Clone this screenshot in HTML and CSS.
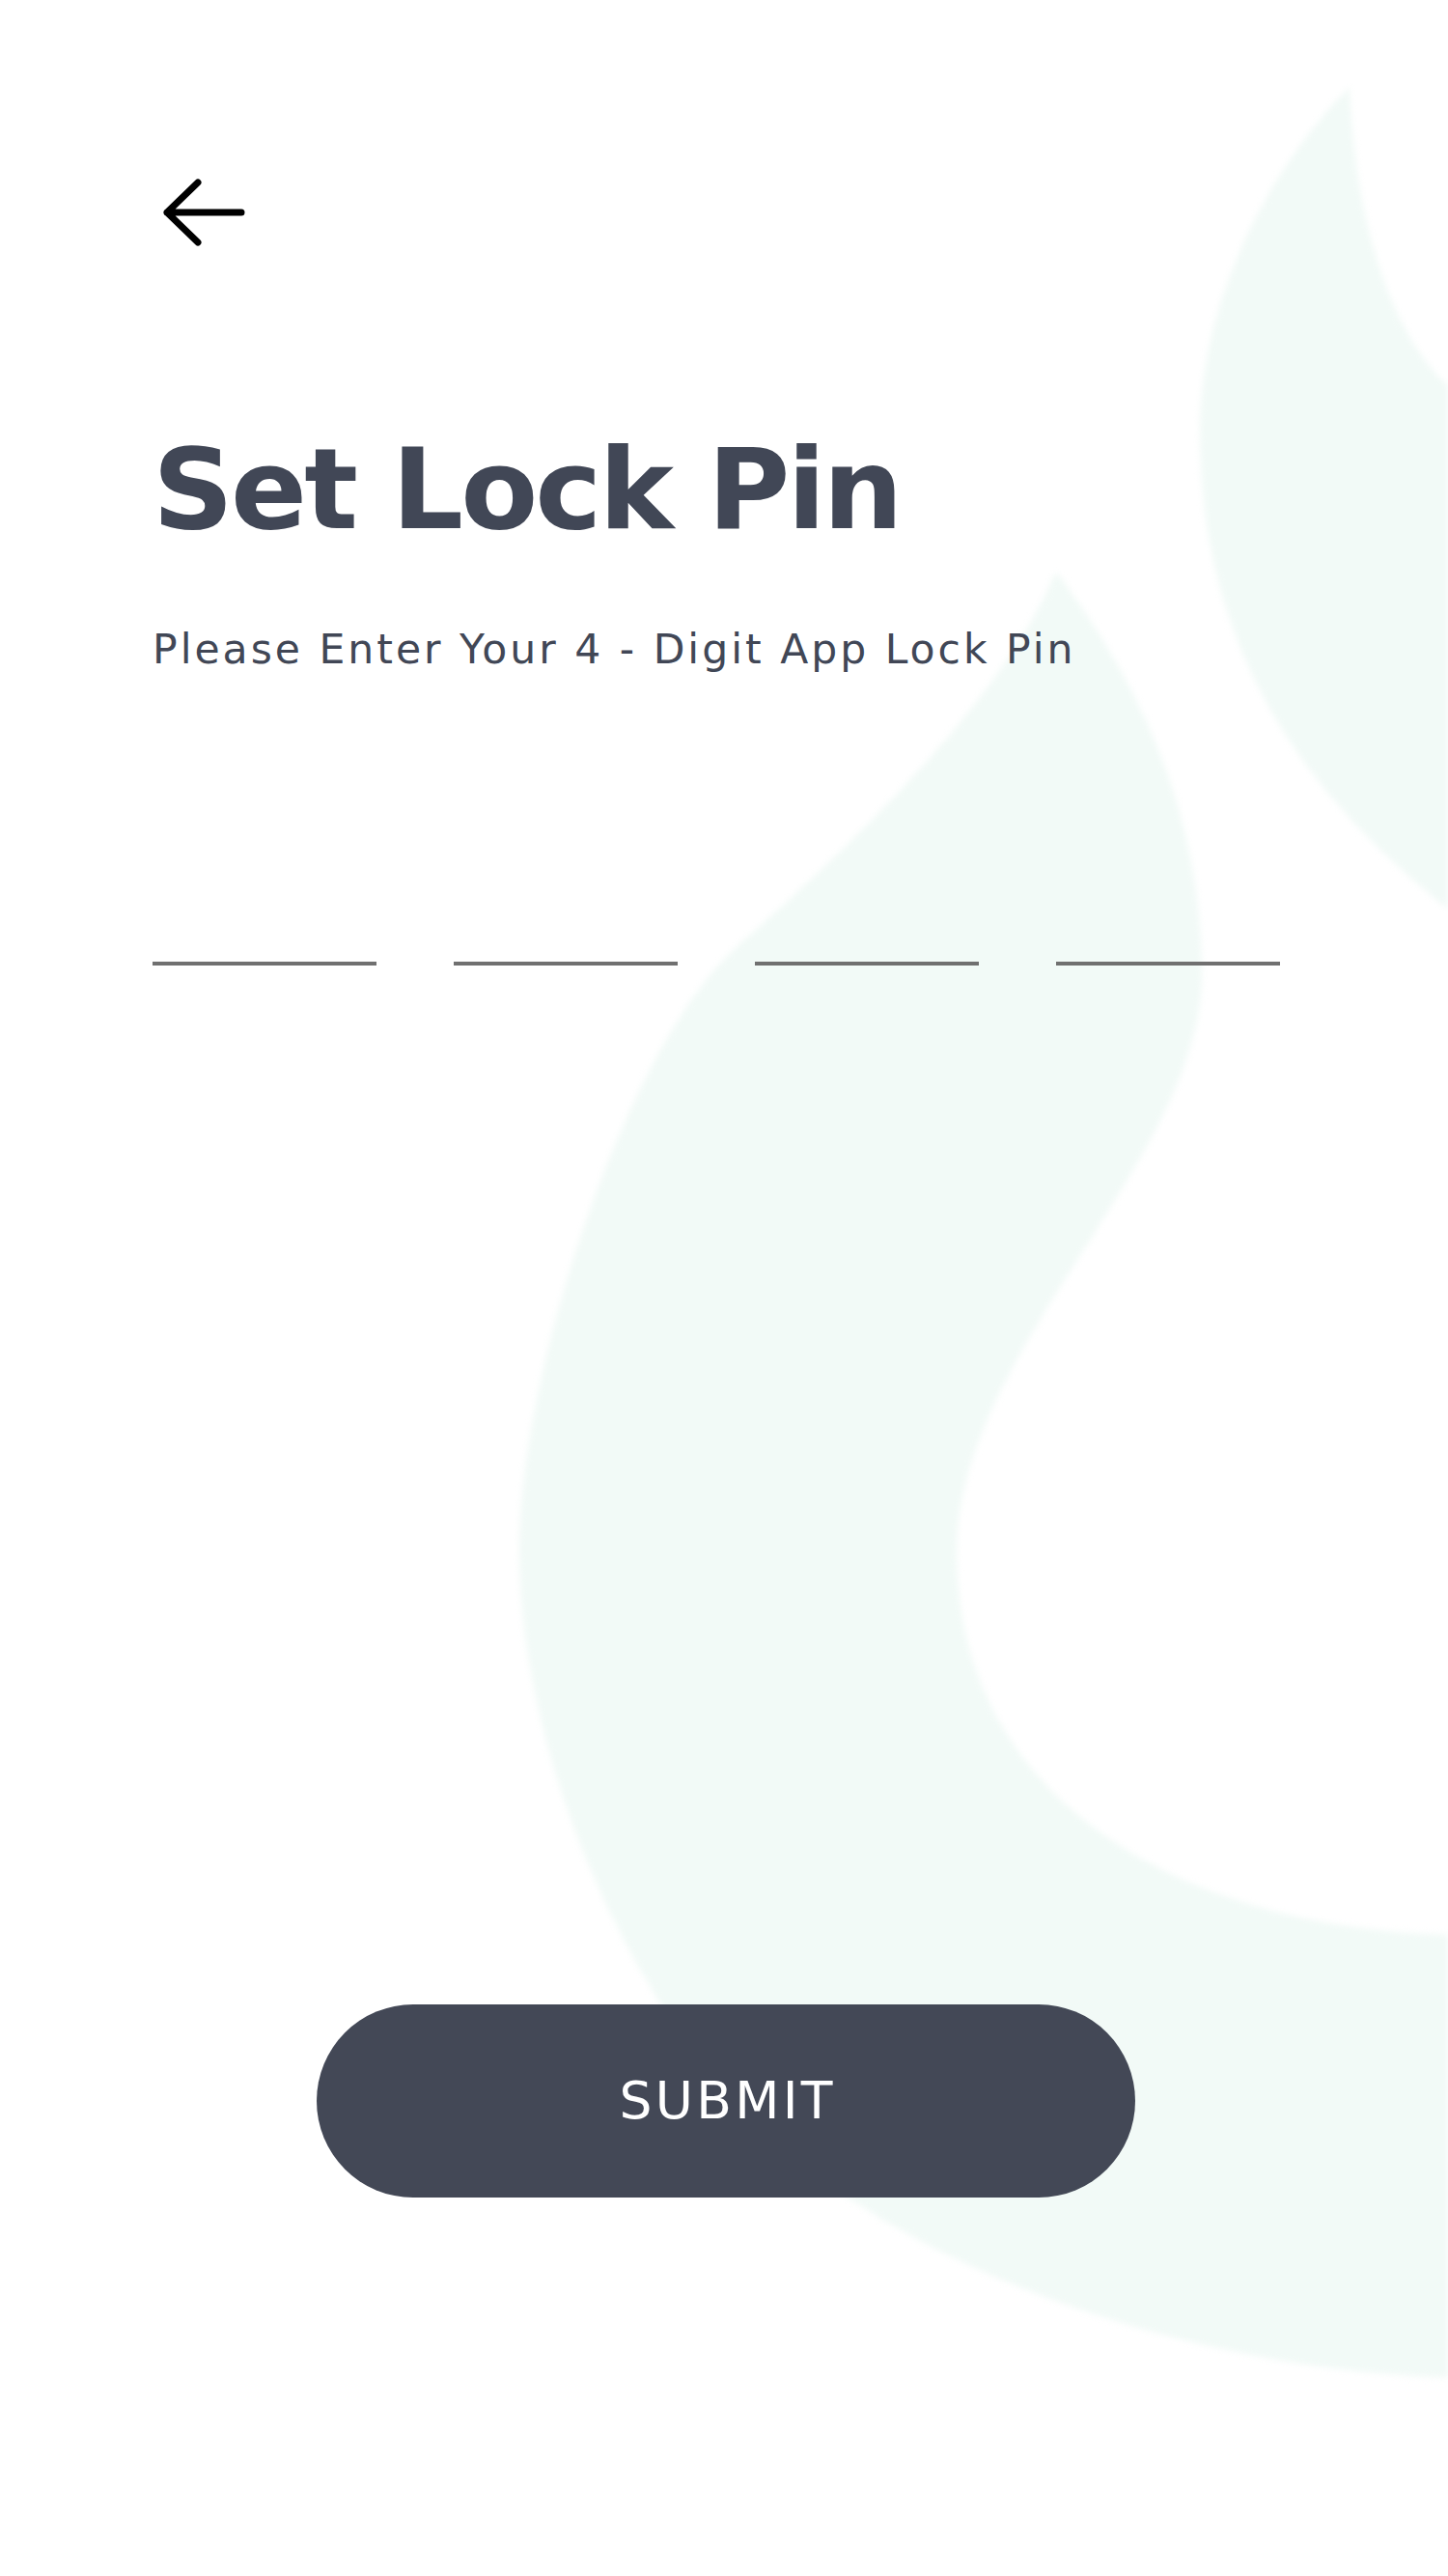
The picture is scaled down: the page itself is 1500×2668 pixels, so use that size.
FILE: index.html
```html
<!DOCTYPE html>
<html lang="en">
<head>
<meta charset="utf-8">
<title>Set Lock Pin</title>
<link rel="stylesheet" href="styles.css">
</head>
<body>
<div class="screen">
  <svg class="backdrop" viewBox="0 0 1500 2668" width="1500" height="2668" aria-hidden="true">
    <path class="blob" d="M1094,592 C1040,720 900,860 765,979 C650,1080 538,1420 538,1606 C538,1850 690,2170 883,2279 C1050,2390 1300,2460 1520,2463 L1520,2004 C1250,2004 991,1880 991,1606 C991,1400 1245,1200 1245,1009 C1245,820 1160,680 1094,592 Z"/>
    <path class="blob" d="M1398,90 C1300,190 1243,330 1243,446 C1243,700 1380,850 1520,957 L1520,415 C1450,370 1405,250 1398,90 Z"/>
  </svg>

  <div class="content">
    <button class="back" type="button" aria-label="Back">
      <svg viewBox="0 0 100 80" width="100" height="80">
        <path d="M15 40 H92 M47 9 L15 40 L47 71" fill="none" stroke="#000" stroke-width="7" stroke-linecap="round" stroke-linejoin="round"/>
      </svg>
    </button>

    <h1 class="title">Set Lock Pin</h1>
    <p class="subtitle">Please Enter Your 4 - Digit App Lock Pin</p>

    <div class="pin-row">
      <div class="pin-slot"></div>
      <div class="pin-slot"></div>
      <div class="pin-slot"></div>
      <div class="pin-slot"></div>
    </div>
  </div>

  <div class="actions">
    <button class="submit" type="button">SUBMIT</button>
  </div>
</div>
</body>
</html>
```

FILE: styles.css
```css
html, body {
  margin: 0;
  padding: 0;
  background: #ffffff;
}

.screen {
  position: relative;
  width: 1500px;
  height: 2668px;
  overflow: hidden;
  background: #ffffff;
  font-family: "DejaVu Sans", "Open Sans", sans-serif;
  color: #414756;
}

.backdrop {
  position: absolute;
  left: 0;
  top: 0;
  z-index: 0;
  filter: blur(3px);
}

.blob {
  fill: #f2faf7;
}

.content {
  position: relative;
  z-index: 1;
  padding: 180px 0 0 158px;
}

.back {
  display: block;
  width: 100px;
  height: 80px;
  padding: 0;
  margin: 0;
  border: 0;
  background: transparent;
  cursor: pointer;
}

.back svg {
  display: block;
}

.title {
  margin: 189px 0 0;
  font-family: "DejaVu Sans", "Open Sans", sans-serif;
  font-size: 116.6px;
  line-height: 1;
  font-weight: 700;
  letter-spacing: -2.9px;
  color: #414756;
}

.subtitle {
  margin: 86px 0 0;
  font-family: "DejaVu Sans", "Open Sans", sans-serif;
  font-size: 42.5px;
  line-height: 1;
  font-weight: 400;
  letter-spacing: 3px;
  color: #414756;
}

.pin-row {
  display: flex;
  gap: 80px;
  margin-top: 302px;
}

.pin-slot {
  width: 232px;
  height: 4px;
  background: #707070;
}

.actions {
  position: relative;
  z-index: 1;
  display: flex;
  justify-content: center;
  padding-left: 4px;
  margin-top: 1076px;
}

.submit {
  width: 848px;
  height: 200px;
  border: 0;
  border-radius: 100px;
  background: #434856;
  color: #ffffff;
  font-family: "DejaVu Sans", "Open Sans", sans-serif;
  font-size: 53.5px;
  line-height: 1;
  font-weight: 400;
  letter-spacing: 3.3px;
  text-indent: 3.3px;
  display: flex;
  align-items: center;
  justify-content: center;
  padding: 0;
  cursor: pointer;
}
```
